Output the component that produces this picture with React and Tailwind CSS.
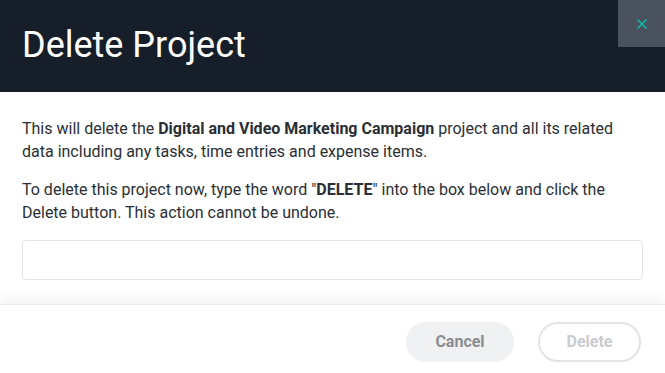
import { X } from 'lucide-react';

export default function App() {
  return (
    <div className="w-[665px] h-[373px] bg-white flex flex-col overflow-hidden" style={{ fontFamily: 'Roboto, "Liberation Sans", sans-serif' }}>
      {/* Header */}
      <div className="relative h-[92px] bg-[#161e29] flex items-center px-[22px] shrink-0">
        <h1 className="text-[36px] text-white font-normal leading-none -mt-[2px]">Delete Project</h1>
        <button className="absolute top-0 right-0 w-[47px] h-[47px] bg-[#4a525d] flex items-center justify-center">
          <X className="w-[16px] h-[16px] text-[#14b8a6] mt-[1px]" strokeWidth={2.5} />
        </button>
      </div>

      {/* Body */}
      <div className="flex-1 px-[22px] pt-[25px] text-[16px] leading-[23px] text-[#2a2f36]">
        <p>
          This will delete the <strong className="font-bold">Digital and Video Marketing Campaign</strong> project and all its related data including any tasks, time entries and expense items.
        </p>
        <p className="mt-[15px]">
          To delete this project now, type the word "<strong className="font-bold">DELETE</strong>" into the box below and click the Delete button. This action cannot be undone.
        </p>
        <input
          type="text"
          className="mt-[16px] w-full h-[40px] border border-[#e3e4e6] rounded-[4px] px-3 outline-none"
        />
      </div>

      {/* Footer */}
      <div className="h-[69px] shrink-0 border-t border-[#ececec] shadow-[0_-7px_8px_rgba(0,0,0,0.035)] flex items-start justify-end gap-[24px] pt-[17px] pr-[24px]">
        <button className="w-[108px] h-[40px] rounded-full bg-[#f0f1f3] text-[#8a8c90] text-[16px] font-bold">
          Cancel
        </button>
        <button className="w-[103px] h-[40px] rounded-full border-2 border-[#e3e4e6] bg-white text-[#c9cbce] text-[16px] font-bold">
          Delete
        </button>
      </div>
    </div>
  );
}
